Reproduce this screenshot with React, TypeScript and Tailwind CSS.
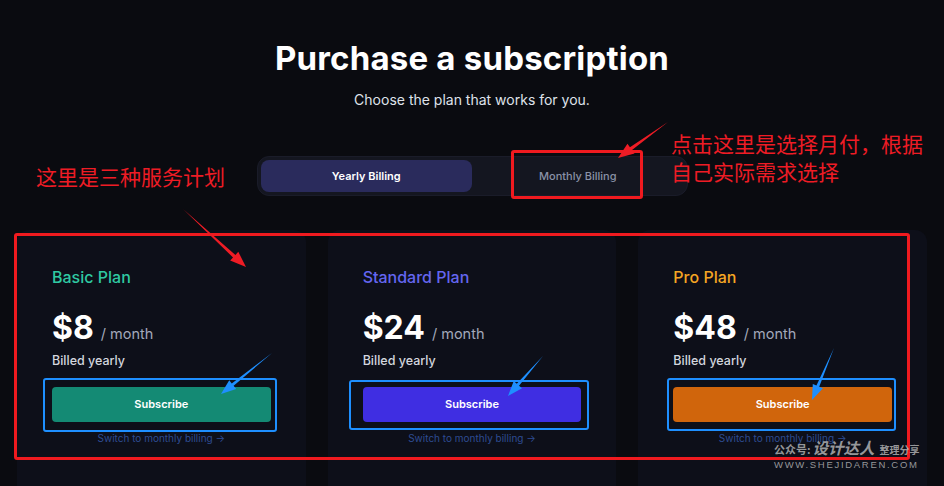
import React from 'react'

type Plan = {
  name: string
  price: string
  nameColor: string
  btn: string
}

const plans: Plan[] = [
  { name: 'Basic Plan', price: '$8', nameColor: 'text-[#2fc9a2]', btn: 'bg-[#148a74]' },
  { name: 'Standard Plan', price: '$24', nameColor: 'text-[#6466f0]', btn: 'bg-[#3f2ee2]' },
  { name: 'Pro Plan', price: '$48', nameColor: 'text-[#f5a623]', btn: 'bg-[#d0650c]' },
]

// tapered annotation arrow, tail -> tip
const arrowPoints = (x1: number, y1: number, x2: number, y2: number, headLen = 14, headW = 12, shaftW = 4) => {
  const dx = x2 - x1
  const dy = y2 - y1
  const len = Math.hypot(dx, dy)
  const ux = dx / len
  const uy = dy / len
  const nx = -uy
  const ny = ux
  const bx = x2 - ux * headLen
  const by = y2 - uy * headLen
  const pts = [
    [x1, y1],
    [bx + (nx * shaftW) / 2, by + (ny * shaftW) / 2],
    [bx + (nx * headW) / 2, by + (ny * headW) / 2],
    [x2, y2],
    [bx - (nx * headW) / 2, by - (ny * headW) / 2],
    [bx - (nx * shaftW) / 2, by - (ny * shaftW) / 2],
  ]
  return pts.map((p) => p.join(',')).join(' ')
}

const PlanCard = ({ plan }: { plan: Plan }) => (
  <div className="rounded-[12px] bg-[#0d0f19] pt-[36px] px-[35px] pb-[60px]">
    <h3 className={`text-[16px] leading-[22px] font-medium ${plan.nameColor}`}>{plan.name}</h3>
    <div className="mt-[20px] flex items-baseline gap-[7px]">
      <span className="text-[32px] leading-[40px] font-bold text-white">{plan.price}</span>
      <span className="text-[14.5px] text-[#a3a9bb]">/ month</span>
    </div>
    <p className="mt-[4px] text-[12.5px] leading-[18px] font-medium text-[#d4d7df]">Billed yearly</p>
    <button
      className={`mt-[17px] w-full h-[35px] rounded-[4px] text-[11px] font-semibold text-white ${plan.btn}`}
    >
      Subscribe
    </button>
    <p className="mt-[9px] text-center text-[10px] leading-[14px] text-[#2e4c92]">
      Switch to monthly billing →
    </p>
  </div>
)

export default function App() {
  return (
    <div
      className="relative w-full h-[486px] overflow-hidden bg-[#0a0b10]"
      style={{ fontFamily: 'Inter, "Noto Sans", "Noto Sans CJK SC", sans-serif' }}
    >
      <div className="flex flex-col items-center pt-[38px]">
        <h1 className="text-[33px] leading-[40px] font-bold text-white tracking-[0.2px]">
          Purchase a subscription
        </h1>
        <p className="mt-[12px] text-[14px] leading-[20px] text-[#dfe2ea]">
          Choose the plan that works for you.
        </p>
        <div className="mt-[46px] grid grid-cols-2 w-[431px] h-[40px] p-[3px] rounded-[12px] bg-[#141620] border border-[#1a1c29]">
          <div className="flex items-center justify-center rounded-[8px] bg-[#2a2b5c] text-[11px] font-semibold text-white">
            Yearly Billing
          </div>
          <div className="flex items-center justify-center text-[11px] font-medium text-[#8a92a7]">
            Monthly Billing
          </div>
        </div>
      </div>

      <div className="mt-[34px] px-[17px] grid grid-cols-3 gap-[22px]">
        {plans.map((p) => (
          <PlanCard key={p.name} plan={p} />
        ))}
      </div>

      {/* annotations */}
      <div className="absolute left-[14px] top-[233px] w-[896px] h-[227px] border-[3px] border-[#f01a1f] rounded-[3px] pointer-events-none" />
      <div className="absolute left-[511px] top-[150px] w-[132px] h-[49px] border-[3px] border-[#f01a1f] rounded-[3px] pointer-events-none" />
      <div className="absolute left-[43px] top-[378px] w-[234px] h-[54px] border-[2px] border-[#1e8fff] rounded-[3px] pointer-events-none" />
      <div className="absolute left-[349px] top-[380px] w-[240px] h-[50px] border-[2px] border-[#1e8fff] rounded-[3px] pointer-events-none" />
      <div className="absolute left-[667px] top-[378px] w-[229px] h-[53px] border-[2px] border-[#1e8fff] rounded-[3px] pointer-events-none" />

      <div
        className="absolute left-[36px] top-[162px] text-[21px] leading-[28px] text-[#ee1c25]"
        style={{ fontFamily: '"Noto Sans CJK SC", sans-serif' }}
      >
        这里是三种服务计划
      </div>
      <div
        className="absolute left-[671px] top-[129px] text-[21px] leading-[28px] text-[#ee1c25]"
        style={{ fontFamily: '"Noto Sans CJK SC", sans-serif' }}
      >
        <div>点击这里是选择月付，根据</div>
        <div>自己实际需求选择</div>
      </div>

      <svg className="absolute left-0 top-0 pointer-events-none" width="944" height="486" viewBox="0 0 944 486">
        <polygon points={arrowPoints(183, 209, 246, 267, 16, 12, 3.5)} fill="#ee1c25" />
        <polygon points={arrowPoints(668, 122, 618, 158, 16, 12, 3.5)} fill="#ee1c25" />
        <polygon points={arrowPoints(272, 353, 221, 394, 15, 11, 3)} fill="#1e8fff" />
        <polygon points={arrowPoints(543, 356, 508, 396, 15, 11, 3)} fill="#1e8fff" />
        <polygon points={arrowPoints(834, 348, 812, 400, 15, 11, 3)} fill="#1e8fff" />
      </svg>

      <div
        className="absolute left-[774px] top-[438px] w-[150px] text-[#c4c4c4]/75 pointer-events-none"
        style={{ fontFamily: '"Noto Sans CJK SC", sans-serif' }}
      >
        <div className="flex items-baseline leading-[19px] whitespace-nowrap">
          <span className="text-[11px] font-bold">公众号:</span>
          <span className="ml-[2px] text-[15.5px] font-bold italic">设计达人</span>
          <span className="ml-[5px] text-[10px] font-bold">整理分享</span>
        </div>
        <div
          className="text-[9.5px] leading-[11px] tracking-[1.7px] font-medium whitespace-nowrap"
          style={{ fontFamily: '"Liberation Sans", sans-serif' }}
        >
          WWW.SHEJIDAREN.COM
        </div>
      </div>
    </div>
  )
}
